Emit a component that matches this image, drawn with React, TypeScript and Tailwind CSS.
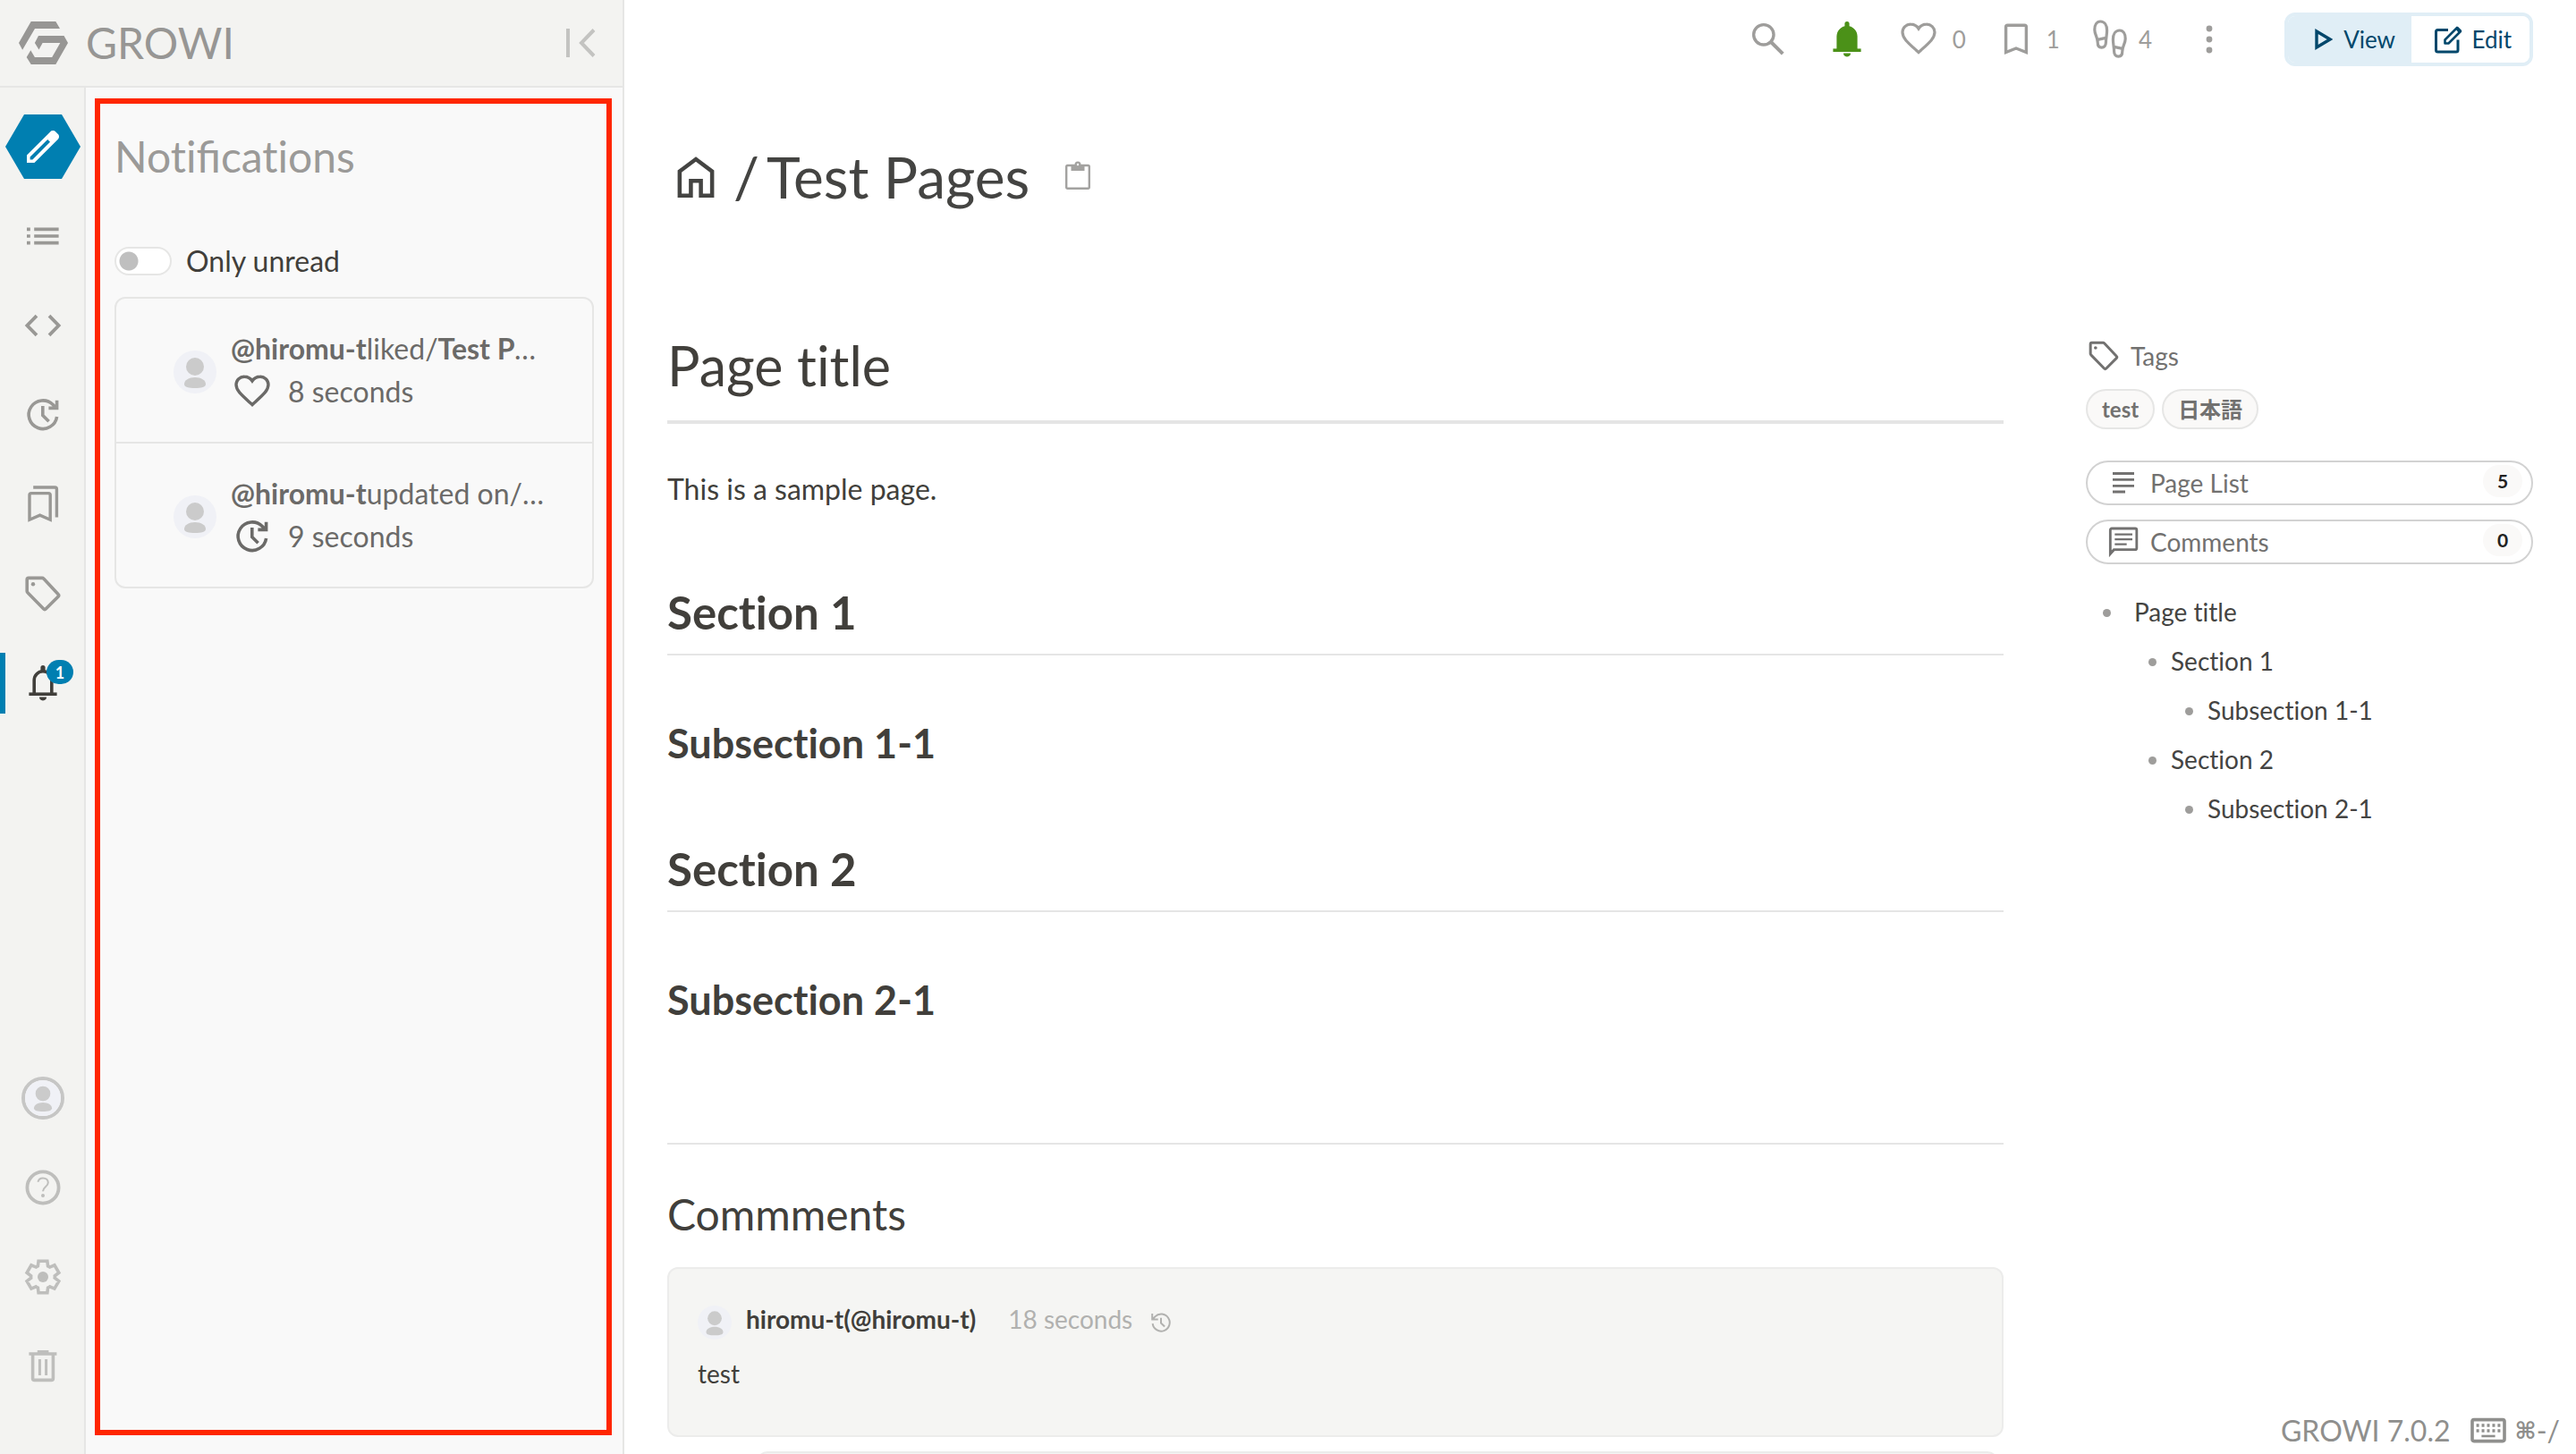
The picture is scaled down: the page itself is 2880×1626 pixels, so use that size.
import type { ReactNode } from "react";

type IconProps = { className?: string; width?: number; children: ReactNode };

function Icon({ className = "size-12", width = 1.7, children }: IconProps) {
  return (
    <svg
      viewBox="0 0 24 24"
      className={`shrink-0 ${className}`}
      fill="none"
      stroke="currentColor"
      strokeWidth={width}
      aria-hidden="true"
    >
      {children}
    </svg>
  );
}

const Heart = ({ className, width = 1.6 }: { className?: string; width?: number }) => (
  <Icon className={className} width={width}>
    <path d="M12 19.3 10.6 18C5.6 13.5 3 11.2 3 8A4.5 4.5 0 0 1 7.6 3.6C9.4 3.6 11 4.5 12 6c1-1.5 2.6-2.4 4.4-2.4A4.5 4.5 0 0 1 21 8c0 3.2-2.6 5.5-7.6 10z" />
  </Icon>
);

const Update = ({ className }: { className?: string }) => (
  <Icon className={className} width={1.8}>
    <path d="M19.8 13A7.9 7.9 0 1 1 17.6 6.3L19.3 8M19.8 3.9v4.3h-4.6M11.9 7v5.2l3.4 3.4" />
  </Icon>
);

const Tag = ({ className }: { className?: string }) => (
  <Icon className={className} width={1.8}>
    <path d="M3.1 4.1a.9.9 0 0 1 .9-.9h7.5a1.5 1.5 0 0 1 1 .4l8 8.6a1 1 0 0 1 0 1.4l-6.8 6.8a1 1 0 0 1-1.4 0l-8.7-8.9a1.5 1.5 0 0 1-.5-1z" />
    <circle cx="6.5" cy="6.6" r="1.1" fill="currentColor" stroke="none" />
  </Icon>
);

const Bell = ({ filled = false }: { filled?: boolean }) => (
  <Icon width={1.8}>
    <path d="M4.2 18.1h15.6" />
    <path d="M7.1 18v-7.7a4.9 4.9 0 0 1 9.8 0V18" fill={filled ? "currentColor" : "none"} />
    <path d="M10.7 6V3.3a1.3 1.3 0 0 1 2.6 0V6zM10 19.8h4a2 1.9 0 0 1-4 0z" fill="currentColor" stroke="none" />
  </Icon>
);

const FOOT =
  "M6.600 2c-2 0-3.200 2-3.200 4.600 0 2.700 1.700 4.300 1.700 7 0 1.900.8 3 2.200 3s2.400-1.100 2.400-2.800c0-2.200.6-4.200.6-6.800C10.300 4.200 9 2 6.600 2zM5 12.200l4.800-1";

const Footprint = () => (
  <Icon width={1.6}>
    <path d={FOOT} />
    <path d={FOOT} transform="translate(24 5) scale(-1 1)" />
  </Icon>
);

const GEAR =
  "m9.25 22-.4-3.2q-.325-.125-.612-.3-.288-.175-.563-.375L4.7 19.375l-2.75-4.75 2.575-1.95Q4.5 12.5 4.5 12.337v-.675q0-.162.025-.337L1.95 9.375l2.75-4.75 2.975 1.25q.275-.2.575-.375.3-.175.6-.3l.4-3.2h5.5l.4 3.2q.325.125.613.3.287.175.562.375l2.975-1.25 2.75 4.75-2.575 1.95q.025.175.025.337v.675q0 .163-.05.338l2.575 1.95-2.75 4.75-2.95-1.25q-.275.2-.575.375-.3.175-.6.3l-.4 3.2z";

function Avatar({ className }: { className: string }) {
  return (
    <svg viewBox="0 0 48 48" className={`shrink-0 rounded-full ${className}`} aria-hidden="true">
      <rect width="48" height="48" fill="#f0f1f6" />
      <circle cx="24" cy="18" r="10" fill="#cbcbcb" />
      <path d="M12 37.500c0-4.200 5-7.500 12-7.500s12 3.300 12 7.500c0 3.600-5 4.500-12 4.500s-12-.9-12-4.500z" fill="#cbcbcb" />
    </svg>
  );
}

function NavItem({ label, active = false, children }: { label: string; active?: boolean; children: ReactNode }) {
  return (
    <li className="flex h-[100px] items-center">
      <button
        type="button"
        aria-label={label}
        className={`relative flex h-[68px] w-full items-center justify-center ${active ? "text-[#413f3b]" : ""}`}
      >
        {active && <span className="absolute left-0 h-full w-1.5 bg-[#007fb1]" />}
        {children}
      </button>
    </li>
  );
}

function Notification({ action, seconds, icon }: { action: string; seconds: string; icon: ReactNode }) {
  return (
    <li>
      <a href="#notification" className="flex h-[160px] items-center gap-4 pr-[54px] pl-16">
        <Avatar className="mt-1 size-12" />
        <div className="min-w-0 flex-1 leading-[48px]">
          <p className="truncate">
            <b>@hiromu-t</b>
            {action}/<b>Test Pages</b>
          </p>
          <p className="flex items-center gap-4">
            {icon}
            {seconds}
          </p>
        </div>
      </a>
    </li>
  );
}

function Sidebar() {
  return (
    <div className="flex w-[698px] shrink-0 flex-col border-r-2 border-[#e6e6e5] bg-[#f3f3f1] text-[#999895]">
      <header className="flex h-[98px] items-center justify-between border-b-2 border-[#e6e6e5] pr-[30px] pl-[21px]">
        <a href="#home" className="flex items-center gap-5 text-5xl text-[#979694]">
          <svg viewBox="0 0 55 48" className="h-12 w-[55px]" fill="currentColor" aria-hidden="true">
            <path d="M13.700 0h27.600L46 8H18L4.100 31.700 0 24z" />
            <path d="M22 16h28.500l4.500 8-13.700 24H13.700l-5-8 4.600-7.700L17.900 40h19.300l9.100-16H26.600l-4.100 7.400L17.900 24z" />
          </svg>
          GROWI
        </a>
        <button type="button" aria-label="Collapse sidebar" className="text-[#c3c3c1]">
          <svg viewBox="0 0 34 34" className="size-[34px]" fill="none" stroke="currentColor" strokeWidth="4" aria-hidden="true">
            <path d="M3 1v32M32 2.500 18 17l14 14.500" />
          </svg>
        </button>
      </header>

      <div className="flex min-h-0 flex-1">
        <nav aria-label="Sidebar" className="flex w-24 shrink-0 flex-col justify-between border-r-2 border-[#e6e6e5] pt-4 pb-12">
          <ul className="w-24">
            <NavItem label="Create page">
              <svg viewBox="0 0 84 72" className="h-[72px] w-[84px] shrink-0" aria-hidden="true">
                <path d="M21 0h42l21 36-21 36H21L0 36z" fill="#007fb1" />
                <path
                  transform="translate(18 12) scale(2)"
                  fill="#fff"
                  fillRule="evenodd"
                  d="M3 21v-4.250L16.200 3.575q.3-.275.663-.425t.762-.15q.4 0 .775.15t.65.45L20.425 5q.3.275.438.65T21 6.400q0 .4-.138.763t-.437.662L7.250 21zM4.800 19.200h1.400L16 9.400 14.600 8l-9.800 9.800z"
                />
              </svg>
            </NavItem>
            <NavItem label="Page tree">
              <Icon width={1.8}>
                <path d="M7.100 8.200h13.700M7.100 12h13.700M7.100 15.800h13.700M3 8.200h1.900M3 12h1.900M3 15.800h1.900" />
              </Icon>
            </NavItem>
            <NavItem label="Custom sidebar">
              <Icon width={1.9}>
                <path d="M8.500 6.600 3.200 12l5.300 5.400M15.500 6.600l5.300 5.400-5.300 5.400" />
              </Icon>
            </NavItem>
            <NavItem label="Recent changes">
              <Update />
            </NavItem>
            <NavItem label="Bookmarks">
              <Icon>
                <path d="M4.500 20.600V6.800a1 1 0 0 1 1-1h9.600a1 1 0 0 1 1 1v13.800l-5.800-2.500zM6.600 2.500h12.100a1 1 0 0 1 1 1v15.700" />
              </Icon>
            </NavItem>
            <NavItem label="Tags">
              <Tag />
            </NavItem>
            <NavItem label="Notifications" active>
              <Bell />
              <span className="absolute top-2 left-[52px] flex h-[27px] w-[30px] items-center justify-center rounded-full bg-[#007fb1] text-lg font-bold text-white">
                1
              </span>
            </NavItem>
          </ul>
          <ul className="w-24 text-[#bebebc]">
            <NavItem label="Account">
              <Avatar className="size-12 border-4 border-[#c6c6c5]" />
            </NavItem>
            <NavItem label="Help">
              <Icon>
                <circle cx="12" cy="12" r="8.800" strokeWidth="1.900" />
                <path d="M9.200 8.900c.3-1.400 1.400-2.200 2.800-2.200 1.700 0 2.900 1 2.900 2.500 0 2.300-2.900 2.600-2.900 4.900" strokeWidth="1" />
                <circle cx="12" cy="16.500" r="1" fill="currentColor" stroke="none" />
              </Icon>
            </NavItem>
            <NavItem label="Settings">
              <Icon>
                <path d={GEAR} transform="translate(1.300 1.300) scale(.89)" strokeWidth="2" />
                <circle cx="12" cy="12" r="3" fill="currentColor" stroke="none" />
              </Icon>
            </NavItem>
            <NavItem label="Trash">
              <Icon width={1.8}>
                <path d="M4.200 5h15.500M6.300 5v13.700a1 1 0 0 0 1 1h9.400a1 1 0 0 0 1-1V5" />
                <path d="M8.900 3.800h6.300M10.200 8v9M13.800 8v9" strokeWidth="1.500" />
              </Icon>
            </NavItem>
          </ul>
        </nav>

        <section className="relative min-w-0 flex-1 bg-[#f9f9f9] px-8 pt-[53px]">
          <div className="pointer-events-none absolute top-3 right-3 bottom-[21px] left-2.5 border-6 border-[#ff2600]" />
          <h3 className="text-5xl leading-[48px] text-[#9b9a98]">
            Noti<span className="[font-variant-ligatures:normal]">fi</span>cations
          </h3>
          <div className="mt-[69px] flex h-12 items-center gap-4">
            <input
              id="only-unread"
              type="checkbox"
              role="switch"
              className="h-8 w-16 appearance-none rounded-full border-2 border-[#e6e6e5] bg-white bg-[radial-gradient(circle_at_14px_14px,#bfbfbf_10px,transparent_11px)]"
            />
            <label htmlFor="only-unread" className="text-[32px] text-[#413f3b]">
              Only unread
            </label>
          </div>
          <ul className="mt-4 divide-y-2 divide-[#e6e6e5] rounded-xl border-2 border-[#e6e6e5] text-[32px] text-[#6b6a68]">
            <Notification action="liked" seconds="8 seconds" icon={<Heart width={1.7} />} />
            <Notification action="updated on" seconds="9 seconds" icon={<Update />} />
          </ul>
        </section>
      </div>
    </div>
  );
}

function TopBar() {
  return (
    <div className="flex h-[88px] items-center justify-end text-[26px] text-[#9e9d9b]">
      <button type="button" aria-label="Search">
        <Icon>
          <circle cx="9.400" cy="9.400" r="5.600" />
          <path d="m13.500 13.500 6.600 6.600" strokeWidth="2" />
        </Icon>
      </button>
      <button type="button" aria-label="Subscribed" className="ml-10 text-[#4b9118]">
        <Bell filled />
      </button>
      <button type="button" aria-label="Like" className="ml-8 flex items-center gap-3.5">
        <Heart />0
      </button>
      <button type="button" aria-label="Bookmark" className="ml-8 flex items-center gap-2.5">
        <Icon>
          <path d="M6.300 19.300V5.100a1 1 0 0 1 1-1h9.400a1 1 0 0 1 1 1v14.200L12 17z" />
        </Icon>
        1
      </button>
      <button type="button" aria-label="Seen by" className="ml-8 flex items-center gap-2">
        <Footprint />4
      </button>
      <button type="button" aria-label="More" className="ml-10">
        <Icon>
          <g fill="currentColor" stroke="none">
            <circle cx="12" cy="6" r="1.700" />
            <circle cx="12" cy="12" r="1.700" />
            <circle cx="12" cy="18" r="1.700" />
          </g>
        </Icon>
      </button>
      <div className="ml-[60px] flex h-[60px] overflow-hidden rounded-xl border-4 border-[#e0eef6] text-[#00476b]">
        <button type="button" className="flex w-[138px] items-center justify-end gap-3 bg-[#e0eef6] pr-[18px]">
          <svg viewBox="0 0 20 24" className="h-6 w-5" fill="none" stroke="currentColor" strokeWidth="3.400" aria-hidden="true">
            <path d="M2 3v18l15-9z" />
          </svg>
          View
        </button>
        <button type="button" className="flex w-[132px] items-center justify-end gap-2.5 rounded-r-lg bg-white pr-5">
          <svg viewBox="0 0 32 32" className="size-8" fill="none" stroke="currentColor" strokeWidth="3" aria-hidden="true">
            <path d="M16 5.500H4.500a2 2 0 0 0-2 2V28a2 2 0 0 0 2 2H25a2 2 0 0 0 2-2V16.500" />
            <path d="M12.500 20.500v-4L26 3l4 4-13.500 13.500z" strokeWidth="2.600" strokeLinejoin="round" />
            <path d="m24 4 3-2 4 4-3 3z" fill="currentColor" stroke="none" />
          </svg>
          Edit
        </button>
      </div>
    </div>
  );
}

function TocItem({ className, children }: { className: string; children: string }) {
  return (
    <li className={`flex h-[55px] items-center ${className}`}>
      <span className="mt-1 size-[9px] rounded-full bg-[#9e9d9b]" />
      <a href="#toc">{children}</a>
    </li>
  );
}

function Aside() {
  return (
    <aside className="w-[500px] shrink-0 pt-2.5 text-[28px] text-[#727170]">
      <div className="flex h-10 items-center gap-2.5">
        <Tag className="size-10" />
        Tags
      </div>
      <div className="mt-[17px] flex gap-2 text-2xl font-bold">
        <a href="#test" className="flex h-[45px] items-center rounded-full border-2 border-[#e6e6e5] bg-[#faf9f8] px-4">
          test
        </a>
        <a href="#japanese" className="flex h-[45px] items-center rounded-full border-2 border-[#e6e6e5] bg-[#faf9f8] px-4">
          日本語
        </a>
      </div>
      <div className="mt-[35px] flex flex-col gap-4">
        <button type="button" className="flex h-[50px] items-center gap-2.5 rounded-full border-2 border-[#d2d2d2] pr-2.5 pl-5">
          <Icon className="size-10">
            <path d="M4.800 5.700h14.400M4.800 9.800h14.400M4.800 14h14.400M4.800 18h8.400" />
          </Icon>
          Page List
          <span className="mb-1 ml-auto flex h-9 w-11 items-center justify-center rounded-full bg-[#faf9f8] text-[21px] font-bold text-[#222]">
            5
          </span>
        </button>
        <button type="button" className="flex h-[50px] items-center gap-2.5 rounded-full border-2 border-[#d2d2d2] pr-2.5 pl-5">
          <Icon className="size-10">
            <path d="M3.200 20V4a1 1 0 0 1 1-1h15.700a1 1 0 0 1 1 1v12.200a1 1 0 0 1-1 1H5.600z" />
            <path d="M2.400 21.700v-4h4z" fill="currentColor" stroke="none" />
            <path d="M6.200 7h11.800M6.200 10.300h11.800M6.200 13.600h8" strokeWidth="1.300" />
          </Icon>
          Comments
          <span className="mb-1 ml-auto flex h-9 w-11 items-center justify-center rounded-full bg-[#faf9f8] text-[21px] font-bold text-[#222]">
            0
          </span>
        </button>
      </div>
      <ul className="mt-[25px] text-[#444442]">
        <TocItem className="gap-[26px] pl-[19px]">Page title</TocItem>
        <TocItem className="gap-4 pl-[70px]">Section 1</TocItem>
        <TocItem className="gap-4 pl-[111px]">Subsection 1-1</TocItem>
        <TocItem className="gap-4 pl-[70px]">Section 2</TocItem>
        <TocItem className="gap-4 pl-[111px]">Subsection 2-1</TocItem>
      </ul>
    </aside>
  );
}

function Section({ title, subtitle }: { title: string; subtitle: string }) {
  return (
    <>
      <h2 className="mt-[83px] border-b-2 border-[#e5e5e5] pb-[15px] text-[51px] leading-[62px] font-bold">{title}</h2>
      <h3 className="mt-[71px] text-[45px] leading-[54px] font-bold">{subtitle}</h3>
    </>
  );
}

export default function App() {
  return (
    <div className="flex h-screen overflow-hidden bg-white font-['Lato','Noto_Sans_CJK_JP',sans-serif] [font-variant-ligatures:none]">
      <Sidebar />
      <main className="relative min-w-0 flex-1 overflow-hidden px-12 text-[#413f3b]">
        <TopBar />
        <h1 className="mt-[78px] flex h-16 items-center text-[64px] text-[#444442]">
          <a href="#home" aria-label="Home">
            <Icon className="size-16">
              <path d="M5.200 19.800V9.600L12 4.500l6.800 5.100v10.200h-4.700v-6.200H9.900v6.200z" />
            </Icon>
          </a>
          <span className="ml-2.5">/</span>
          <a href="#page" className="ml-2">
            Test Pages
          </a>
          <button type="button" aria-label="Copy path" className="mb-1 ml-10 text-[#a3a2a0]">
            <svg viewBox="0 0 28 32" className="h-8 w-7" fill="none" stroke="currentColor" strokeWidth="2.400" aria-hidden="true">
              <rect x="1.200" y="5" width="25.600" height="25.800" rx="1.500" />
              <path d="M6.500 4h4a3.500 3.500 0 0 1 7 0h4v7h-15z" fill="currentColor" stroke="none" />
              <circle cx="14" cy="4" r="1.200" fill="#fff" stroke="none" />
            </svg>
          </button>
        </h1>

        <div className="mt-[138px] flex gap-[92px]">
          <div className="min-w-0 flex-1">
            <article>
              <h1 className="border-b-4 border-[#e5e5e5] pb-5 text-[61px] leading-[82px]">Page title</h1>
              <p className="mt-[49px] text-[32px] leading-[48px]">This is a sample page.</p>
              <Section title="Section 1" subtitle="Subsection 1-1" />
              <Section title="Section 2" subtitle="Subsection 2-1" />
            </article>
            <section className="mt-[133px] border-t-2 border-[#e5e5e5] pt-[50px]">
              <h4 className="text-5xl leading-[56px]">Commments</h4>
              <div className="mt-[31px] rounded-xl border-2 border-[#ececeb] bg-[#f5f5f3] px-8 pt-[34px] pb-12 text-[28px] leading-[42px]">
                <div className="flex h-11 items-center">
                  <Avatar className="mt-2 size-[38px]" />
                  <b className="ml-4">hiromu-t(@hiromu-t)</b>
                  <span className="ml-9 text-[#b1b1af]">18 seconds</span>
                  <Icon className="mt-2 ml-[18px] size-7 text-[#b1b1af]" width={1.7}>
                    <path d="M4 13a8.200 8.200 0 1 0 2.300-6.700L3.800 9M3.600 3.500V9h5.600M12 7.500v5l3.500 3.400" />
                  </Icon>
                </div>
                <p className="mt-[18px]">test</p>
              </div>
              <div className="mt-4 mr-1.5 ml-[100px] h-[190px] rounded-xl border-2 border-[#ececeb] bg-[#f5f5f3]" />
            </section>
          </div>
          <Aside />
        </div>

        <footer className="absolute right-[18px] bottom-0.5 flex h-12 items-center text-[32px] text-[#8f8f8d]">
          GROWI 7.0.2
          <Icon className="ml-[18px] size-12" width={1.8}>
            <rect x="3" y="5.800" width="18" height="12" rx="1" />
            <path d="M5.300 9h13.400M5.300 12h13.400" strokeDasharray="1.500 1.475" />
            <path d="M8.200 15h7.600" strokeWidth="1.300" />
          </Icon>
          <span className="ml-1.5 flex items-center">
            <span className="font-['DejaVu_Sans'] text-[26px] font-bold">⌘</span>-/
          </span>
        </footer>
      </main>
    </div>
  );
}
